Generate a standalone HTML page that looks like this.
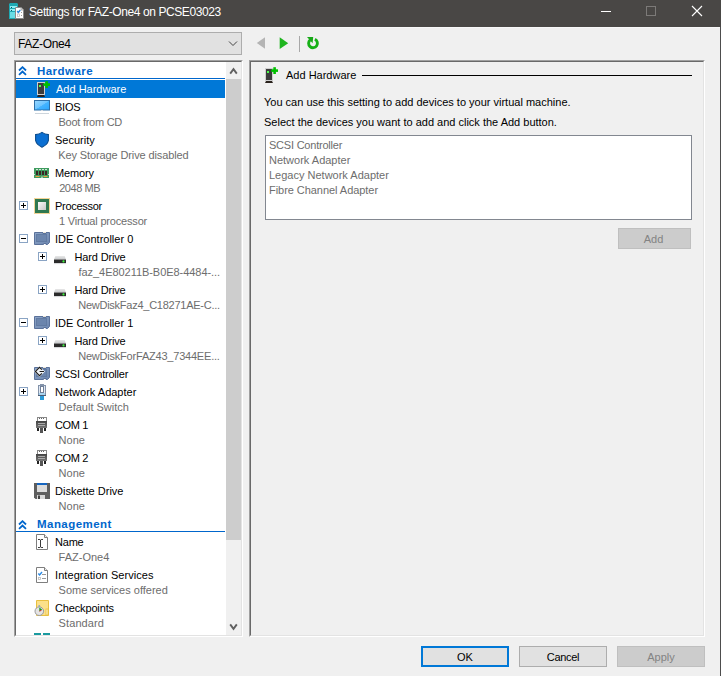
<!DOCTYPE html>
<html><head><meta charset="utf-8"><style>
html,body{margin:0;padding:0;width:721px;height:676px;overflow:hidden;background:#f0f0f0;position:relative;font-family:"Liberation Sans", sans-serif}
.t{position:absolute;white-space:pre;font-size:11px;line-height:15px}
svg{display:block}
</style></head><body>
<div style="position:absolute;left:0;top:0;width:721px;height:27px;background:#494745"></div><div style="position:absolute;left:0;top:27px;width:720px;height:1px;background:#f7f7f7"></div><div class="t" style="left:29px;top:4.64px;color:#fff;font-size:12px;font-weight:normal;letter-spacing:-0.4px">Settings for FAZ-One4 on PCSE03023</div>
<div style="position:absolute;left:601px;top:11px;width:10px;height:1px;background:#fff"></div><div style="position:absolute;left:646px;top:6px;width:8px;height:8px;border:1px solid #7c7a78"></div><svg style="position:absolute;left:691px;top:5px" width="12" height="12" viewBox="0 0 12 12"><path d="M1 1 L11 11 M11 1 L1 11" stroke="#fff" stroke-width="1.1"/></svg><div style="position:absolute;left:720px;top:27px;width:1px;height:649px;background:#4d4d4d"></div><div style="position:absolute;left:14px;top:32px;width:226px;height:21px;border:1px solid #adadad;background:#e1e1e1"></div><div class="t" style="left:18px;top:37.14px;color:#000;font-size:12px;font-weight:normal;letter-spacing:-0.34px">FAZ-One4</div>
<svg style="position:absolute;left:228px;top:40px" width="10" height="7" viewBox="0 0 10 7"><path d="M1 1.5 L5 5.5 L9 1.5" fill="none" stroke="#444" stroke-width="1"/></svg><svg style="position:absolute;left:255px;top:36px" width="70" height="17" viewBox="0 0 70 17">
<path d="M10 1.2 V12.8 L1.8 7Z" fill="#b4b4b4"/>
<path d="M24.7 1.3 V13 L33.2 7.2Z" fill="#1fb51f"/>
<rect x="44" y="0" width="1" height="16" fill="#a8a8a8"/>
<path d="M59.9 3.3 A4.4 4.4 0 1 1 55.2 3.9" fill="none" stroke="#16b016" stroke-width="2.9"/>
<path d="M52 1 L58.2 1 L57.6 7.2Z" fill="#18a818"/>
</svg><div style="position:absolute;left:14px;top:60px;width:229px;height:577px;box-sizing:border-box;border-top:1px solid #a0a0a0;border-left:1px solid #a0a0a0;border-right:1px solid #fff;border-bottom:1px solid #fff"></div><div style="position:absolute;left:15px;top:61px;width:227px;height:575px;box-sizing:border-box;border-top:1px solid #696969;border-left:1px solid #696969;border-right:1px solid #e3e3e3;border-bottom:1px solid #e3e3e3;background:#fff;overflow:hidden" id="tree"></div><div style="position:absolute;left:226px;top:62px;width:15px;height:573px;background:#f0f0f0"></div><div style="position:absolute;left:226px;top:79px;width:15px;height:461px;background:#cdcdcd"></div><svg style="position:absolute;left:229px;top:67px" width="9" height="8" viewBox="0 0 9 8"><path d="M1.2 6.6 L4.5 2.2 L7.8 6.6" fill="none" stroke="#606060" stroke-width="1.9"/></svg><svg style="position:absolute;left:229px;top:623px" width="9" height="8" viewBox="0 0 9 8"><path d="M1.2 1.4 L4.5 5.8 L7.8 1.4" fill="none" stroke="#606060" stroke-width="1.9"/></svg><svg style="position:absolute;left:18px;top:66px" width="9" height="10" viewBox="0 0 9 10"><path d="M1 4.5 L4.5 1.2 L8 4.5 M1 8.8 L4.5 5.5 L8 8.8" fill="none" stroke="#0066cc" stroke-width="1.8"/></svg><div class="t" style="left:37px;top:64.42px;color:#0066cc;font-size:11.5px;font-weight:bold;letter-spacing:0.45px">Hardware</div>
<div style="position:absolute;left:16px;top:78px;width:209px;height:1px;background:#0066cc"></div><div style="position:absolute;left:16px;top:80px;width:209px;height:18px;background:#0078d7"></div><div class="t" style="left:56px;top:82.29px;color:#fff;font-size:11px;font-weight:normal;">Add Hardware</div>
<div class="t" style="left:55px;top:100.49px;color:#000;font-size:11px;font-weight:normal;letter-spacing:-0.25px">BIOS</div>
<div class="t" style="left:58.5px;top:115.49px;color:#6d6d6d;font-size:11px;font-weight:normal;letter-spacing:-0.26px">Boot from CD</div>
<div class="t" style="left:55px;top:133.49px;color:#000;font-size:11px;font-weight:normal;letter-spacing:0px">Security</div>
<div class="t" style="left:58.3px;top:148.49px;color:#6d6d6d;font-size:11px;font-weight:normal;letter-spacing:-0.12px">Key Storage Drive disabled</div>
<div class="t" style="left:55px;top:166.49px;color:#000;font-size:11px;font-weight:normal;letter-spacing:-0.15px">Memory</div>
<div class="t" style="left:59.2px;top:181.49px;color:#6d6d6d;font-size:11px;font-weight:normal;letter-spacing:-0.45px">2048 MB</div>
<div class="t" style="left:55px;top:199.49px;color:#000;font-size:11px;font-weight:normal;letter-spacing:-0.3px">Processor</div>
<div class="t" style="left:59px;top:214.49px;color:#6d6d6d;font-size:11px;font-weight:normal;letter-spacing:-0.18px">1 Virtual processor</div>
<div class="t" style="left:55px;top:232.49px;color:#000;font-size:11px;font-weight:normal;letter-spacing:0px">IDE Controller 0</div>
<div class="t" style="left:74.5px;top:250.49px;color:#000;font-size:11px;font-weight:normal;letter-spacing:-0.15px">Hard Drive</div>
<div class="t" style="left:78.5px;top:265.49px;color:#6d6d6d;font-size:11px;font-weight:normal;letter-spacing:-0.05px">faz_4E80211B-B0E8-4484-...</div>
<div class="t" style="left:74.5px;top:283.49px;color:#000;font-size:11px;font-weight:normal;letter-spacing:-0.15px">Hard Drive</div>
<div class="t" style="left:78.2px;top:298.49px;color:#6d6d6d;font-size:11px;font-weight:normal;letter-spacing:-0.25px">NewDiskFaz4_C18271AE-C...</div>
<div class="t" style="left:55px;top:316.49px;color:#000;font-size:11px;font-weight:normal;letter-spacing:0px">IDE Controller 1</div>
<div class="t" style="left:74.5px;top:334.49px;color:#000;font-size:11px;font-weight:normal;letter-spacing:-0.15px">Hard Drive</div>
<div class="t" style="left:78.2px;top:349.49px;color:#6d6d6d;font-size:11px;font-weight:normal;letter-spacing:-0.21px">NewDiskForFAZ43_7344EE...</div>
<div class="t" style="left:55px;top:367.49px;color:#000;font-size:11px;font-weight:normal;letter-spacing:-0.22px">SCSI Controller</div>
<div class="t" style="left:55px;top:385.49px;color:#000;font-size:11px;font-weight:normal;letter-spacing:0px">Network Adapter</div>
<div class="t" style="left:58.6px;top:400.49px;color:#6d6d6d;font-size:11px;font-weight:normal;letter-spacing:0px">Default Switch</div>
<div class="t" style="left:55px;top:418.49px;color:#000;font-size:11px;font-weight:normal;letter-spacing:-0.35px">COM 1</div>
<div class="t" style="left:58.6px;top:433.49px;color:#6d6d6d;font-size:11px;font-weight:normal;letter-spacing:0px">None</div>
<div class="t" style="left:55px;top:451.49px;color:#000;font-size:11px;font-weight:normal;letter-spacing:-0.35px">COM 2</div>
<div class="t" style="left:58.6px;top:466.49px;color:#6d6d6d;font-size:11px;font-weight:normal;letter-spacing:0px">None</div>
<div class="t" style="left:55px;top:484.49px;color:#000;font-size:11px;font-weight:normal;letter-spacing:0px">Diskette Drive</div>
<div class="t" style="left:58.6px;top:499.49px;color:#6d6d6d;font-size:11px;font-weight:normal;letter-spacing:0px">None</div>
<div class="t" style="left:55px;top:535.49px;color:#000;font-size:11px;font-weight:normal;letter-spacing:-0.2px">Name</div>
<div class="t" style="left:58.6px;top:550.49px;color:#6d6d6d;font-size:11px;font-weight:normal;letter-spacing:0px">FAZ-One4</div>
<div class="t" style="left:55px;top:568.49px;color:#000;font-size:11px;font-weight:normal;letter-spacing:0.07px">Integration Services</div>
<div class="t" style="left:58.6px;top:583.49px;color:#6d6d6d;font-size:11px;font-weight:normal;letter-spacing:0px">Some services offered</div>
<div class="t" style="left:55px;top:601.49px;color:#000;font-size:11px;font-weight:normal;letter-spacing:-0.15px">Checkpoints</div>
<div class="t" style="left:58.6px;top:616.49px;color:#6d6d6d;font-size:11px;font-weight:normal;letter-spacing:0.1px">Standard</div>
<svg style="position:absolute;left:18px;top:520px" width="9" height="10" viewBox="0 0 9 10"><path d="M1 4.5 L4.5 1.2 L8 4.5 M1 8.8 L4.5 5.5 L8 8.8" fill="none" stroke="#0066cc" stroke-width="1.8"/></svg><div class="t" style="left:37px;top:517.42px;color:#0066cc;font-size:11.5px;font-weight:bold;letter-spacing:0.45px">Management</div>
<div style="position:absolute;left:16px;top:531px;width:209px;height:1px;background:#0066cc"></div><svg style="position:absolute;left:19px;top:201px" width="9" height="9" viewBox="0 0 9 9"><rect x="0.5" y="0.5" width="8" height="8" fill="#fff" stroke="#8aa4c4"/><path d="M2 4.5 H7" stroke="#000" stroke-width="1"/><path d="M4.5 2 V7" stroke="#000" stroke-width="1"/></svg><svg style="position:absolute;left:19px;top:234px" width="9" height="9" viewBox="0 0 9 9"><rect x="0.5" y="0.5" width="8" height="8" fill="#fff" stroke="#8aa4c4"/><path d="M2 4.5 H7" stroke="#000" stroke-width="1"/></svg><svg style="position:absolute;left:38px;top:252px" width="9" height="9" viewBox="0 0 9 9"><rect x="0.5" y="0.5" width="8" height="8" fill="#fff" stroke="#8aa4c4"/><path d="M2 4.5 H7" stroke="#000" stroke-width="1"/><path d="M4.5 2 V7" stroke="#000" stroke-width="1"/></svg><svg style="position:absolute;left:38px;top:285px" width="9" height="9" viewBox="0 0 9 9"><rect x="0.5" y="0.5" width="8" height="8" fill="#fff" stroke="#8aa4c4"/><path d="M2 4.5 H7" stroke="#000" stroke-width="1"/><path d="M4.5 2 V7" stroke="#000" stroke-width="1"/></svg><svg style="position:absolute;left:19px;top:318px" width="9" height="9" viewBox="0 0 9 9"><rect x="0.5" y="0.5" width="8" height="8" fill="#fff" stroke="#8aa4c4"/><path d="M2 4.5 H7" stroke="#000" stroke-width="1"/></svg><svg style="position:absolute;left:38px;top:336px" width="9" height="9" viewBox="0 0 9 9"><rect x="0.5" y="0.5" width="8" height="8" fill="#fff" stroke="#8aa4c4"/><path d="M2 4.5 H7" stroke="#000" stroke-width="1"/><path d="M4.5 2 V7" stroke="#000" stroke-width="1"/></svg><svg style="position:absolute;left:19px;top:387px" width="9" height="9" viewBox="0 0 9 9"><rect x="0.5" y="0.5" width="8" height="8" fill="#fff" stroke="#8aa4c4"/><path d="M2 4.5 H7" stroke="#000" stroke-width="1"/><path d="M4.5 2 V7" stroke="#000" stroke-width="1"/></svg><div style="position:absolute;left:249px;top:60px;width:456px;height:577px;box-sizing:border-box;border-top:1px solid #a0a0a0;border-left:1px solid #a0a0a0;border-right:1px solid #fff;border-bottom:1px solid #fff"></div><div style="position:absolute;left:250px;top:61px;width:454px;height:575px;box-sizing:border-box;border-top:1px solid #696969;border-left:1px solid #696969;border-right:1px solid #e3e3e3;border-bottom:1px solid #e3e3e3"></div><div class="t" style="left:286px;top:68.39px;color:#000;font-size:11px;font-weight:normal;">Add Hardware</div>
<div style="position:absolute;left:362px;top:75px;width:330px;height:1px;background:#000"></div><div class="t" style="left:264px;top:94.69px;color:#000;font-size:11px;font-weight:normal;">You can use this setting to add devices to your virtual machine.</div>
<div class="t" style="left:264px;top:114.69px;color:#000;font-size:11px;font-weight:normal;">Select the devices you want to add and click the Add button.</div>
<div style="position:absolute;left:265px;top:135px;width:425px;height:83px;border:1px solid #828790;background:#fff"></div><div class="t" style="left:269px;top:137.99px;color:#6d6d6d;font-size:11px;font-weight:normal;letter-spacing:-0.22px">SCSI Controller</div>
<div class="t" style="left:269px;top:152.99px;color:#6d6d6d;font-size:11px;font-weight:normal;letter-spacing:0px">Network Adapter</div>
<div class="t" style="left:269px;top:167.99px;color:#6d6d6d;font-size:11px;font-weight:normal;letter-spacing:0px">Legacy Network Adapter</div>
<div class="t" style="left:269px;top:182.99px;color:#6d6d6d;font-size:11px;font-weight:normal;letter-spacing:-0.05px">Fibre Channel Adapter</div>
<div style="position:absolute;left:618px;top:228px;width:71px;height:19px;border:1px solid #bfbfbf;background:#cccccc"></div><div class="t" style="left:617px;top:232px;width:73px;text-align:center;color:#838383">Add</div><div style="position:absolute;left:421px;top:646px;width:84px;height:17px;border:2px solid #0078d7;background:#e1e1e1"></div><div class="t" style="left:421px;top:650px;width:88px;text-align:center">OK</div><div style="position:absolute;left:519px;top:646px;width:86px;height:19px;border:1px solid #adadad;background:#e1e1e1"></div><div class="t" style="left:519px;top:650px;width:88px;text-align:center;letter-spacing:-0.3px">Cancel</div><div style="position:absolute;left:617px;top:646px;width:86px;height:19px;border:1px solid #bfbfbf;background:#cccccc"></div><div class="t" style="left:617px;top:650px;width:88px;text-align:center;color:#838383">Apply</div>
<svg style="position:absolute;left:0;top:0;pointer-events:none" width="721" height="676" viewBox="0 0 721 676">
<defs>
<linearGradient id="scr" x1="0" y1="0" x2="1" y2="1"><stop offset="0" stop-color="#9ad8ff"/><stop offset="0.5" stop-color="#6cc4ff"/><stop offset="0.52" stop-color="#45b4ff"/><stop offset="1" stop-color="#2aa6ff"/></linearGradient>
<linearGradient id="hdt" x1="0" y1="0" x2="0" y2="1"><stop offset="0" stop-color="#e8e8e8"/><stop offset="1" stop-color="#c4c6c8"/></linearGradient>
<linearGradient id="card" x1="0" y1="0" x2="1" y2="1"><stop offset="0" stop-color="#8ea6c8"/><stop offset="1" stop-color="#6a84ad"/></linearGradient>
<linearGradient id="com" x1="0" y1="0" x2="0" y2="1"><stop offset="0" stop-color="#444"/><stop offset="1" stop-color="#777"/></linearGradient>
<linearGradient id="cpu" x1="0" y1="0" x2="1" y2="1"><stop offset="0" stop-color="#fafafa"/><stop offset="1" stop-color="#c8c8c8"/></linearGradient>
</defs>
<!-- title icon -->
<path d="M9 4 L10 3 H17 L18 4 V19 H9Z" fill="#1fa9b3"/>
<rect x="10" y="6" width="7" height="2" fill="#8ff0f7"/><rect x="10" y="9" width="7" height="2" fill="#8ff0f7"/>
<rect x="11" y="7" width="1" height="1" fill="#0d5560"/><rect x="11" y="10" width="1" height="1" fill="#0d5560"/>
<rect x="10" y="12" width="7" height="6" fill="#6adde6"/>
<path d="M15.5 7.5 H21 L23.5 10 V18.5 H15.5Z" fill="#fff" stroke="#8a8a8a" stroke-width="1"/>
<path d="M17.2 11 L18.3 12.5 L20.3 10" fill="none" stroke="#2a8be0" stroke-width="1.4"/>
<rect x="17.5" y="14" width="2" height="2.5" fill="none" stroke="#c0c0c0" stroke-width="0.8"/>
<path d="M21 7.5 V10 H23.5" fill="#ddd" stroke="#9a9a9a" stroke-width="0.8"/>
<rect x="21" y="12" width="1" height="1" fill="#999"/><rect x="21" y="15" width="1" height="1" fill="#999"/>
<!-- tree add hardware (selected) -->
<g transform="translate(36,80)">
  <rect x="1.5" y="2.5" width="7" height="12" fill="#3c3c3c" stroke="#cfcfcf" stroke-width="1"/>
  <rect x="3" y="5" width="2" height="2" fill="#4dff4d"/>
  <path d="M1 17 L2 15 H8 L9 17Z" fill="#2a221c"/>
  <rect x="9.3" y="1.2" width="2.6" height="6.8" fill="#00c000"/>
  <rect x="7.2" y="3.3" width="6.8" height="2.6" fill="#00c000"/>
</g>
<!-- right pane add hardware -->
<g transform="translate(264,66)">
  <rect x="1.5" y="2.5" width="7" height="12" fill="#3c3c3c" stroke="#cfcfcf" stroke-width="1"/>
  <rect x="3" y="5" width="2" height="2" fill="#4dff4d"/>
  <path d="M1 17 L2 15 H8 L9 17Z" fill="#2a221c"/>
  <rect x="9.3" y="1.2" width="2.6" height="6.8" fill="#00c000"/>
  <rect x="7.2" y="3.3" width="6.8" height="2.6" fill="#00c000"/>
</g>
<!-- BIOS -->
<rect x="34.5" y="100.5" width="15" height="9.5" fill="url(#scr)" stroke="#2f6fa6" stroke-width="1"/>
<rect x="41" y="110" width="2" height="1" fill="#d8dde3"/>
<rect x="35" y="113" width="14" height="1" fill="#cdd5dc"/>
<!-- Security shield -->
<path d="M35.6 134.6 Q39.5 134.3 42 132.4 Q44.5 134.3 48.4 134.6 V140.5 Q47.6 144.5 42 147.2 Q36.4 144.5 35.6 140.5Z" fill="#0b6fd2" stroke="#0b4b8c" stroke-width="1.1"/>
<!-- Memory -->
<path d="M34 168 H49 V174 H48.3 V175 H49 V178 H42.5 V176.5 H41.5 V178 H34 V175 H34.7 V174 H34Z" fill="#3f9b5f"/>
<rect x="36" y="169" width="2" height="1" fill="#cfe8d6"/><rect x="39" y="169" width="2" height="1" fill="#cfe8d6"/><rect x="42" y="169" width="2" height="1" fill="#cfe8d6"/><rect x="45" y="169" width="2" height="1" fill="#cfe8d6"/>
<rect x="36" y="171" width="2" height="4" fill="#3b2626"/><rect x="39" y="171" width="2" height="4" fill="#3b2626"/><rect x="42" y="171" width="2" height="4" fill="#3b2626"/><rect x="45" y="171" width="2" height="4" fill="#3b2626"/>
<rect x="35.5" y="176" width="4" height="1" fill="#f0a040"/><rect x="43.5" y="176" width="4" height="1" fill="#f0a040"/>
<!-- Processor -->
<rect x="34" y="198" width="16" height="16" fill="#e8b040" opacity="0.55"/>
<rect x="35" y="199" width="14" height="14" fill="#2f7850"/>
<rect x="38" y="202" width="8" height="8" fill="url(#cpu)"/>
<!-- IDE controller 0 / 1 -->
<g transform="translate(34,232)">
  <path d="M0.5 0.5 H9 V1.5 H12 V0.5 H15.5 V10.5 L13.5 12.5 H12 V11.5 H9.5 V12.5 H0.5Z" fill="url(#card)" stroke="#5a719a" stroke-width="1"/>
  <rect x="2.5" y="2.5" width="10" height="7" fill="#6a84ac" stroke="#5f78a0" stroke-width="1" opacity="0.9"/>
  <rect x="9" y="0" width="3" height="1" fill="#e8e4d8"/>
</g>
<g transform="translate(34,316)">
  <path d="M0.5 0.5 H9 V1.5 H12 V0.5 H15.5 V10.5 L13.5 12.5 H12 V11.5 H9.5 V12.5 H0.5Z" fill="url(#card)" stroke="#5a719a" stroke-width="1"/>
  <rect x="2.5" y="2.5" width="10" height="7" fill="#6a84ac" stroke="#5f78a0" stroke-width="1" opacity="0.9"/>
  <rect x="9" y="0" width="3" height="1" fill="#e8e4d8"/>
</g>
<!-- HDs -->
<g transform="translate(53,255)">
  <path d="M1 4.6 L2.3 1 H11.7 L13 4.6Z" fill="url(#hdt)"/>
  <rect x="1" y="4.5" width="12" height="3.6" fill="#2b2b2b"/>
  <rect x="1" y="8.1" width="12" height="1" fill="#d6d8da"/>
  <circle cx="10.5" cy="6.4" r="1.1" fill="#3cf03c"/>
</g>
<g transform="translate(53,288)">
  <path d="M1 4.6 L2.3 1 H11.7 L13 4.6Z" fill="url(#hdt)"/>
  <rect x="1" y="4.5" width="12" height="3.6" fill="#2b2b2b"/>
  <rect x="1" y="8.1" width="12" height="1" fill="#d6d8da"/>
  <circle cx="10.5" cy="6.4" r="1.1" fill="#3cf03c"/>
</g>
<g transform="translate(53,339)">
  <path d="M1 4.6 L2.3 1 H11.7 L13 4.6Z" fill="url(#hdt)"/>
  <rect x="1" y="4.5" width="12" height="3.6" fill="#2b2b2b"/>
  <rect x="1" y="8.1" width="12" height="1" fill="#d6d8da"/>
  <circle cx="10.5" cy="6.4" r="1.1" fill="#3cf03c"/>
</g>
<!-- SCSI -->
<g transform="translate(34,367)">
  <path d="M0.5 0.5 H9 V1.5 H12 V0.5 H15.5 V10.5 L13.5 12.5 H12 V11.5 H9.5 V12.5 H0.5Z" fill="url(#card)" stroke="#5a719a" stroke-width="1"/>
  <rect x="2.5" y="2.5" width="10" height="7" fill="#6a84ac" stroke="#5f78a0" stroke-width="1" opacity="0.9"/>
  <rect x="9" y="0" width="3" height="1" fill="#e8e4d8"/>
</g>
<path d="M39.5 366.5 L45 371.5 L39.5 377 L34 371.5Z" fill="#fff" opacity="0.9"/>
<path d="M41.9 369.6 L39.5 367.3 L35.3 371.5 L39.5 375.7 L41.9 373.4" fill="none" stroke="#1a1a1a" stroke-width="1.1"/>
<path d="M39.6 371.5 H44" stroke="#1a1a1a" stroke-width="1"/>
<!-- Network adapter -->
<rect x="40.5" y="384.5" width="3" height="2" fill="#eef2f8" stroke="#8393aa" stroke-width="1"/>
<rect x="38.5" y="385.5" width="7" height="10" fill="#e2e9f3" stroke="#8393aa" stroke-width="1"/>
<rect x="40.5" y="386.5" width="3" height="6" fill="#fff" stroke="#6f7f98" stroke-width="1"/>
<rect x="39" y="393" width="6" height="2" fill="#a8d4f0"/>
<rect x="38" y="395" width="8" height="1" fill="#4c5c74"/>
<rect x="40" y="396" width="4" height="4" fill="#2a9ad8"/>
<!-- COM 1 / 2 -->
<g>
<rect x="37.5" y="417.5" width="9" height="4" fill="#fff" stroke="#888" stroke-width="1"/>
<rect x="39" y="418" width="1" height="1" fill="#666"/><rect x="41" y="418" width="1" height="1" fill="#666"/><rect x="43" y="418" width="1" height="1" fill="#666"/>
<rect x="36" y="421" width="11" height="7" fill="url(#com)"/>
<rect x="38" y="423" width="7" height="1" fill="#aaa"/><rect x="38" y="425" width="7" height="1" fill="#aaa"/>
<rect x="37" y="428" width="2" height="3" fill="#222"/><rect x="44" y="428" width="2" height="3" fill="#222"/>
<rect x="40" y="428" width="3" height="5" fill="#555"/>
</g>
<g transform="translate(0,33)">
<rect x="37.5" y="417.5" width="9" height="4" fill="#fff" stroke="#888" stroke-width="1"/>
<rect x="39" y="418" width="1" height="1" fill="#666"/><rect x="41" y="418" width="1" height="1" fill="#666"/><rect x="43" y="418" width="1" height="1" fill="#666"/>
<rect x="36" y="421" width="11" height="7" fill="url(#com)"/>
<rect x="38" y="423" width="7" height="1" fill="#aaa"/><rect x="38" y="425" width="7" height="1" fill="#aaa"/>
<rect x="37" y="428" width="2" height="3" fill="#222"/><rect x="44" y="428" width="2" height="3" fill="#222"/>
<rect x="40" y="428" width="3" height="5" fill="#555"/>
</g>
<!-- Diskette -->
<path d="M34 483 H50 V499 H35.5 L34 497.5Z" fill="#5e5e5e"/>
<rect x="37" y="483" width="10" height="2" fill="#1565c0"/>
<rect x="37" y="485" width="10" height="7" fill="#dcdcdc"/>
<rect x="37" y="495" width="8" height="4" fill="#d8d8d8"/>
<rect x="38" y="495.5" width="2" height="3.5" fill="#444"/>
<!-- Name doc -->
<g transform="translate(36,534)">
  <path d="M0.5 0.5 H8.5 L11.5 3.5 V15.5 H0.5Z" fill="#fff" stroke="#7e7e7e" stroke-width="1"/>
  <path d="M8.5 0.5 V3.5 H11.5" fill="#eee" stroke="#7e7e7e" stroke-width="1"/>
</g>
<path d="M38 539.5 Q40.5 539 40.5 540.5 Q40.5 539 43 539.5 M38 547.5 Q40.5 548 40.5 546.5 Q40.5 548 43 547.5 M40.5 540 V547" fill="none" stroke="#3a3a3a" stroke-width="1"/>
<!-- Integration services -->
<g transform="translate(36,567)">
  <path d="M0.5 0.5 H8.5 L11.5 3.5 V15.5 H0.5Z" fill="#fff" stroke="#7e7e7e" stroke-width="1"/>
  <path d="M8.5 0.5 V3.5 H11.5" fill="#eee" stroke="#7e7e7e" stroke-width="1"/>
</g>
<path d="M38.3 573.5 L39.6 575 L42 572" fill="none" stroke="#2a8ae6" stroke-width="1.4"/>
<rect x="42" y="574" width="4" height="1" fill="#999"/><rect x="42" y="578" width="4" height="1" fill="#999"/>
<rect x="38.5" y="577.5" width="2" height="2" fill="none" stroke="#bbb" stroke-width="0.8"/>
<!-- Checkpoints -->
<path d="M36.5 600.5 H48.5 V615.5 H36.5Z" fill="#fbe08a" stroke="#e8bf40" stroke-width="1"/>
<rect x="46" y="609" width="2" height="6" fill="#fff2c0" stroke="#e8bf40" stroke-width="0.8"/>
<circle cx="39.3" cy="611.2" r="4.3" fill="#e4e4e4" stroke="#9a9a9a" stroke-width="1"/>
<rect x="38.5" y="605" width="1.6" height="2" fill="#9ab"/>
<path d="M39.3 607.5 L42.2 609.5 L39.3 611.2Z" fill="#18a018"/>
<path d="M39.3 611.2 L41.5 610.3" stroke="#d02020" stroke-width="0.9"/>
<!-- partial teal icon -->
<rect x="34" y="633" width="7" height="2" fill="#1a9aa0"/>
<rect x="43" y="633" width="7" height="2" fill="#1a9aa0"/>
</svg>

</body></html>
